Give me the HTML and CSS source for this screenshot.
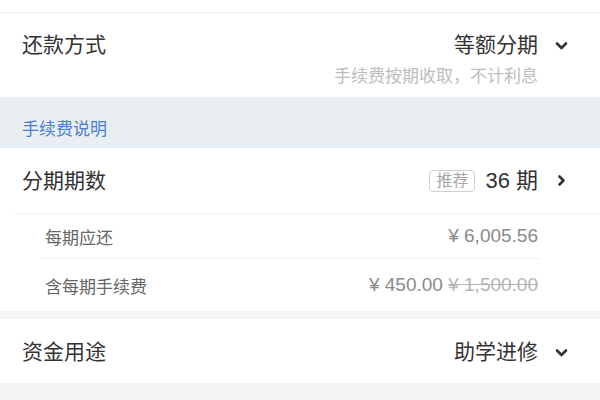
FILE: index.html
```html
<!DOCTYPE html>
<html lang="zh-CN">
<head>
    <meta charset="UTF-8">
    <meta name="viewport" content="width=device-width, initial-scale=1.0">
    <link rel="stylesheet" href="styles.css">
    <title>分期设置</title>
</head>
<body>
    <!-- previous row, scrolled mostly out of view -->
    <div class="cut-row">
        <div class="cut-inner">
            <span>借款金额</span>
            <span>¥ 180,000.00</span>
        </div>
    </div>

    <div class="card">
        <div class="row main-row with-note">
            <div class="row-line">
                <span class="label">还款方式</span>
                <span class="value">等额分期
                    <svg class="chev" width="13" height="13" viewBox="0 0 13 13"><path d="M2 4.5 L6.5 9 L11 4.5" fill="none" stroke="#333" stroke-width="2.6" stroke-linecap="round" stroke-linejoin="round"/></svg>
                </span>
            </div>
            <div class="note">手续费按期收取，不计利息</div>
        </div>
    </div>

    <div class="tip-band">
        <a class="tip-link" href="#">手续费说明</a>
    </div>

    <div class="card">
        <div class="row main-row split">
            <span class="label">分期期数</span>
            <span class="value">
                <span class="badge">推荐</span>
                <span class="term">36 期</span>
                <svg class="chev" width="13" height="13" viewBox="0 0 13 13"><path d="M4.5 2.5 L8.5 6.5 L4.5 10.5" fill="none" stroke="#333" stroke-width="2.6" stroke-linecap="round" stroke-linejoin="round"/></svg>
            </span>
        </div>
        <div class="sub-list">
            <div class="sub-row">
                <span class="sub-label">每期应还</span>
                <span class="sub-value">¥ 6,005.56</span>
            </div>
            <div class="sub-row">
                <span class="sub-label">含每期手续费</span>
                <span class="sub-value">¥ 450.00 <s class="old-price">¥ 1,500.00</s></span>
            </div>
        </div>
    </div>

    <div class="card gap-top">
        <div class="row main-row split-plain">
            <span class="label">资金用途</span>
            <span class="value">助学进修
                <svg class="chev" width="13" height="13" viewBox="0 0 13 13"><path d="M2 4.5 L6.5 9 L11 4.5" fill="none" stroke="#333" stroke-width="2.6" stroke-linecap="round" stroke-linejoin="round"/></svg>
            </span>
        </div>
    </div>
</body>
</html>
```

FILE: styles.css
```css
body {
    margin: 0;
    background-color: #f4f4f5;
    font-family: "Liberation Sans", "Noto Sans CJK SC", sans-serif;
    color: #333;
}

.cut-row {
    height: 12px;
    overflow: hidden;
    background: #fff;
    border-bottom: 1px solid #f0f0f0;
}

.cut-inner {
    display: flex;
    justify-content: space-between;
    margin-top: -17px;
    padding: 0 62px 0 24px;
    font-size: 17px;
    line-height: 20px;
    color: #d8d8d8;
}

.card {
    background: #fff;
}

.gap-top {
    margin-top: 8px;
}

.row-line,
.split,
.split-plain {
    display: flex;
    justify-content: space-between;
    align-items: center;
}

.main-row {
    padding: 0 32px 0 22px;
    font-size: 21px;
}

.with-note {
    padding-top: 17px;
    padding-bottom: 9px;
}

.row-line {
    height: 30px;
}

.label,
.value {
    line-height: 30px;
}

.value {
    display: flex;
    align-items: center;
}

.chev {
    margin-left: 17px;
}

.note {
    margin-top: 6px;
    text-align: right;
    padding-right: 30px;
    font-size: 17px;
    line-height: 22px;
    color: #bdbdbd;
}

.tip-band {
    background-color: #e9eef2;
    padding: 23px 22px 8px;
    line-height: 20px;
}

.tip-link {
    color: #4a80d4;
    font-size: 17px;
    text-decoration: none;
}

.split {
    height: 65px;
    margin-left: 15px;
    padding-left: 7px;
    border-bottom: 1px solid #f0f0f0;
}

.split-plain {
    height: 64px;
    padding-top: 2px;
    box-sizing: border-box;
}

.badge {
    border: 1px solid #cfcfcf;
    border-radius: 4px;
    padding: 0 6px;
    font-size: 16px;
    line-height: 20px;
    color: #a6a6a6;
    margin-right: 10px;
}

.term {
    font-size: 22px;
}

.sub-list {
    margin: 0 60px 0 40px;
}

.sub-row {
    display: flex;
    justify-content: space-between;
    align-items: center;
    height: 44px;
    padding: 0 2px 0 5px;
    font-size: 17px;
}

.sub-row + .sub-row {
    height: 52px;
    border-top: 1px solid #f0f0f0;
}

.sub-label {
    color: #666;
}

.sub-value {
    font-size: 19px;
    color: #8a8a8a;
}

.old-price {
    color: #b5b5b5;
}
```
